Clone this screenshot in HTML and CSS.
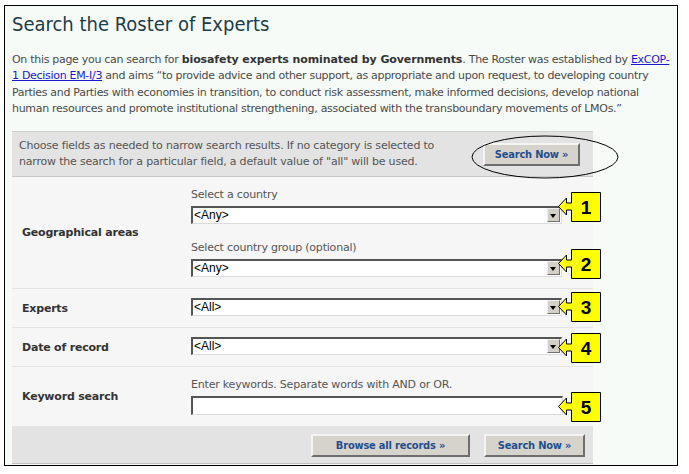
FILE: index.html
```html
<!DOCTYPE html>
<html>
<head>
<meta charset="utf-8">
<link rel="stylesheet" href="styles.css">
</head>
<body>
<div class="frame">
  <h1 class="title">Search the Roster of Experts</h1>
  <p class="intro">On this page you can search for <b>biosafety experts nominated by Governments</b>. The Roster was established by <a href="#">ExCOP-1&nbsp;Decision EM-I/3</a> and aims “to provide advice and other support, as appropriate and upon request, to developing country Parties and Parties with economies in transition, to conduct risk assessment, make informed decisions, develop national human resources and promote institutional strengthening, associated with the transboundary movements of LMOs.”</p>

  <div class="form">
    <div class="info">
      <p class="info-text">Choose fields as needed to narrow search results. If no category is selected to narrow the search for a particular field, a default value of "all" will be used.</p>
      <button class="btn btn-top">Search Now »</button>
    </div>

    <div class="row row-geo">
      <div class="label">Geographical areas</div>
      <div class="field">
        <div class="hint">Select a country</div>
        <div class="select"><span>&lt;Any&gt;</span><i class="arrow"></i></div>
        <div class="hint hint-2">Select country group (optional)</div>
        <div class="select"><span>&lt;Any&gt;</span><i class="arrow"></i></div>
      </div>
    </div>

    <div class="row row-single">
      <div class="label">Experts</div>
      <div class="field">
        <div class="select"><span>&lt;All&gt;</span><i class="arrow"></i></div>
      </div>
    </div>

    <div class="row row-single">
      <div class="label">Date of record</div>
      <div class="field">
        <div class="select"><span>&lt;All&gt;</span><i class="arrow"></i></div>
      </div>
    </div>

    <div class="row row-key">
      <div class="label">Keyword search</div>
      <div class="field">
        <div class="hint">Enter keywords. Separate words with AND or OR.</div>
        <div class="select input"></div>
      </div>
    </div>

    <div class="actions">
      <button class="btn btn-browse">Browse all records »</button>
      <button class="btn btn-search">Search Now »</button>
    </div>
  </div>

  <svg class="ellipse" width="148" height="44" viewBox="0 0 148 44"><ellipse cx="74" cy="22" rx="73" ry="21" fill="none" stroke="#000" stroke-width="1"/></svg>

  <svg class="callout c1" width="44" height="31" viewBox="0 0 44 31"><path d="M13.5 0.5H42.5V29.5H13.5V18H8.5V23L0.5 14.5L8.5 6V11H13.5Z" fill="#ffff00" stroke="#000" stroke-width="1"/><text x="28" y="22" text-anchor="middle">1</text></svg>
  <svg class="callout c2" width="44" height="31" viewBox="0 0 44 31"><path d="M13.5 0.5H42.5V29.5H13.5V18H8.5V23L0.5 14.5L8.5 6V11H13.5Z" fill="#ffff00" stroke="#000" stroke-width="1"/><text x="28" y="22" text-anchor="middle">2</text></svg>
  <svg class="callout c3" width="44" height="31" viewBox="0 0 44 31"><path d="M13.5 0.5H42.5V29.5H13.5V18H8.5V23L0.5 14.5L8.5 6V11H13.5Z" fill="#ffff00" stroke="#000" stroke-width="1"/><text x="28" y="22" text-anchor="middle">3</text></svg>
  <svg class="callout c4" width="44" height="31" viewBox="0 0 44 31"><path d="M13.5 0.5H42.5V29.5H13.5V18H8.5V23L0.5 14.5L8.5 6V11H13.5Z" fill="#ffff00" stroke="#000" stroke-width="1"/><text x="28" y="22" text-anchor="middle">4</text></svg>
  <svg class="callout c5" width="44" height="31" viewBox="0 0 44 31"><path d="M13.5 0.5H42.5V29.5H13.5V18H8.5V23L0.5 14.5L8.5 6V11H13.5Z" fill="#ffff00" stroke="#000" stroke-width="1"/><text x="28" y="22" text-anchor="middle">5</text></svg>
</div>
</body>
</html>
```

FILE: styles.css
```css
html, body {
  margin: 0;
  padding: 0;
  background: #ffffff;
}

body {
  font-family: "DejaVu Sans", Verdana, sans-serif;
  font-size: 11px;
  letter-spacing: -0.2px;
  color: #4a4a4a;
}

.frame {
  position: relative;
  box-sizing: border-box;
  margin: 5px 0 0 4px;
  width: 674px;
  height: 461px;
  border: 1px solid #000;
  background: #f7fbf7;
  padding: 0 1px 0 7px;
}

.title {
  margin: 0;
  padding-top: 6px;
  font-family: "DejaVu Sans Condensed", "DejaVu Sans", Tahoma, sans-serif;
  font-stretch: condensed;
  font-weight: normal;
  font-size: 20px;
  letter-spacing: 0;
  line-height: 24px;
  color: #1d3d4b;
}

.intro {
  margin: 16px 0 0 0;
  line-height: 16.33px;
  letter-spacing: -0.3px;
  color: #4a4a4a;
}

.intro b {
  color: #333;
  letter-spacing: -0.1px;
}

.intro a {
  color: #1a1ad0;
}

.form {
  width: 581px;
  margin-top: 14px;
  background: #f6f6f6;
}

.info {
  display: flex;
  align-items: center;
  height: 46px;
  box-sizing: border-box;
  background: #e3e3e3;
  border-top: 1px solid #cfcfcf;
  border-bottom: 1px solid #c8c8c8;
  padding: 0 13px 0 7px;
}

.info-text {
  margin: 0;
  width: 440px;
  line-height: 16px;
  color: #555;
}

.btn {
  box-sizing: border-box;
  height: 23px;
  padding: 0;
  background: #d6d3cc;
  border: 2px solid;
  border-color: #f4f4f0 #6e6e6e #6e6e6e #f4f4f0;
  font-family: "DejaVu Sans Condensed", "DejaVu Sans", Tahoma, sans-serif;
  font-stretch: condensed;
  font-weight: bold;
  font-size: 11px;
  color: #1f4f8f;
  letter-spacing: -0.2px;
}

.btn-top {
  margin-left: auto;
  width: 97px;
}

.row {
  display: grid;
  grid-template-columns: 179px 1fr;
  border-bottom: 1px solid #e4e4e4;
  box-sizing: border-box;
}

.label {
  display: flex;
  align-items: center;
  padding-left: 10px;
  font-weight: bold;
  color: #333;
}

.field {
  display: flex;
  flex-direction: column;
}

.hint {
  color: #555;
  line-height: 14px;
}

.row-geo {
  height: 112px;
}

.row-geo .field {
  padding-top: 11px;
}

.row-geo .hint {
  margin-bottom: 4px;
}

.row-geo .hint-2 {
  margin-top: 17px;
}

.row-single {
  height: 39px;
}

.row-single .field {
  justify-content: center;
  padding-bottom: 3px;
}

.row-key {
  height: 60px;
}

.row-key .field {
  padding-top: 11px;
}

.row-key .hint {
  margin-bottom: 4px;
}

.select {
  position: relative;
  box-sizing: border-box;
  width: 371px;
  height: 18px;
  background: #fff;
  border-top: 2px solid #555;
  border-left: 2px solid #555;
  border-bottom: 1px solid #dcdcdc;
  border-right: 1px solid #dcdcdc;
  font-family: "Liberation Sans", Arial, sans-serif;
  font-size: 12px;
  letter-spacing: 0;
  color: #000;
  line-height: 15px;
  padding-left: 1px;
}

.input {
  height: 19px;
  width: 372px;
}

.arrow {
  position: absolute;
  right: 1px;
  top: 0;
  width: 13px;
  height: 14px;
  box-sizing: border-box;
  background: #d4d0c8;
  border: 1px solid;
  border-color: #f0f0f0 #707070 #707070 #f0f0f0;
}

.arrow::after {
  content: "";
  position: absolute;
  left: 2px;
  top: 5px;
  border-left: 3.5px solid transparent;
  border-right: 3.5px solid transparent;
  border-top: 4px solid #000;
}

.actions {
  display: flex;
  justify-content: flex-end;
  align-items: center;
  height: 37px;
  box-sizing: border-box;
  background: #e3e3e3;
  border-bottom: 1px solid #c0c0c0;
  padding-right: 8px;
  gap: 14px;
}

.btn-browse {
  width: 159px;
}

.btn-search {
  width: 101px;
}

.ellipse {
  position: absolute;
  left: 466px;
  top: 129px;
}

.callout {
  position: absolute;
  left: 553px;
}

.callout text {
  font-family: "Liberation Sans", Arial, sans-serif;
  font-weight: bold;
  font-size: 19px;
  fill: #000;
}

.c1 { top: 186px; }
.c2 { top: 243px; }
.c3 { top: 286px; }
.c4 { top: 327px; }
.c5 { top: 386px; }
```
